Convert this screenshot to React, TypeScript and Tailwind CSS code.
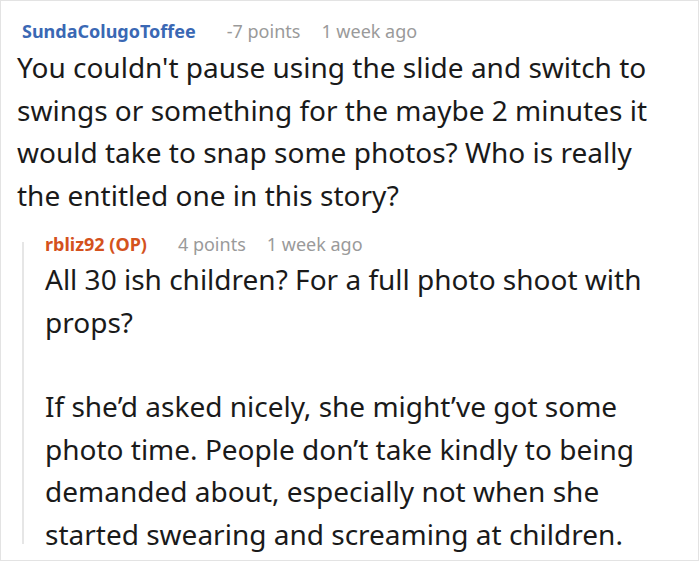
export default function App() {
  return (
    <div className="w-[700px] h-[562px] bg-white" style={{ fontFamily: '"Noto Sans", sans-serif' }}>
      <div className="w-[699px] h-[561px] border border-[#e3e3e3] pl-[16px] pr-[20px] pt-[17px] overflow-hidden">
        <div className="flex items-baseline text-[18px] leading-[26px] pl-[5px]">
          <span className="font-bold text-[#3a68b4]">SundaColugoToffee</span>
          <span className="ml-[31px] text-[#9a9a9a]">-7 points</span>
          <span className="ml-[21px] text-[#9a9a9a]">1 week ago</span>
        </div>
        <p className="text-[28px] leading-[42.5px] text-[#1a1a1a] mt-[2px]">
          You couldn't pause using the slide and switch to swings or something for the maybe 2 minutes it would take to snap some photos? Who is really the entitled one in this story?
        </p>
        <div className="ml-[5px] mt-[15px] flex">
          <div className="w-[2px] shrink-0 bg-[#e6e6e6] mt-[11px] h-[302px]" />
          <div className="pl-[21px]">
            <div className="flex items-baseline text-[18px] leading-[26px]">
              <span className="font-bold text-[#d4521d]">rbliz92 (OP)</span>
              <span className="ml-[31px] text-[#9a9a9a]">4 points</span>
              <span className="ml-[21px] text-[#9a9a9a]">1 week ago</span>
            </div>
            <p className="text-[28px] leading-[42.5px] text-[#1a1a1a] mt-[1px]">
              All 30 ish children? For a full photo shoot with props?
            </p>
            <p className="text-[28px] leading-[42.5px] text-[#1a1a1a] mt-[42px]">
              If she’d asked nicely, she might’ve got some photo time. People don’t take kindly to being demanded about, especially not when she started swearing and screaming at children.
            </p>
          </div>
        </div>
      </div>
    </div>
  );
}
